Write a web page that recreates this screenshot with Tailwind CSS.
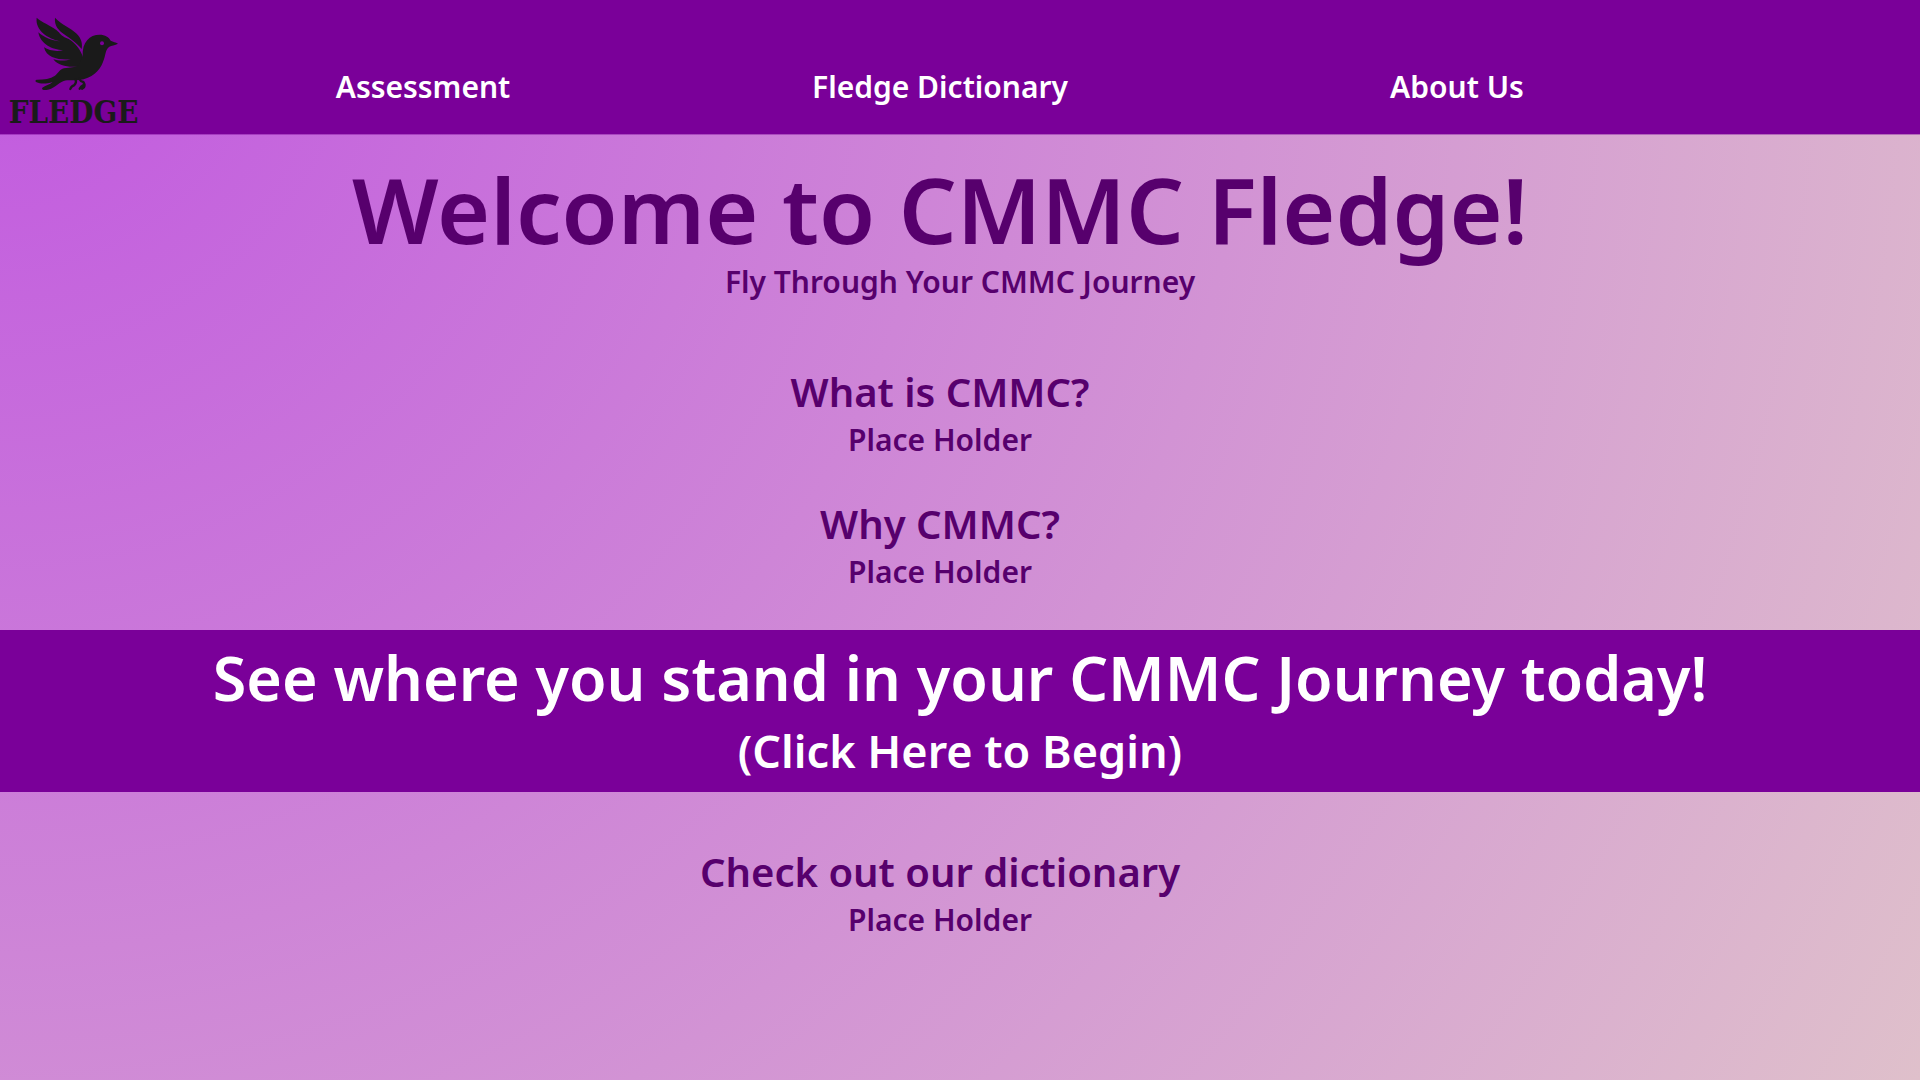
<!DOCTYPE html>
<html lang="en">
<head>
<meta charset="utf-8">
<title>CMMC Fledge</title>
<script src="https://cdn.jsdelivr.net/npm/@tailwindcss/browser@4"></script>
</head>
<body class="min-h-screen bg-[radial-gradient(circle_farthest-corner_at_0%_0%,#c158e0,#dfc0cb)] font-['Noto_Sans',sans-serif] font-semibold text-[#57006d]">
<header class="flex h-[134px] items-start bg-[#7a0099] text-white shadow-[0_1px_0_#7a009966]">
  <a href="#" aria-label="Fledge home" class="w-[146px] shrink-0">
    <svg viewBox="0 0 438 402" class="h-[134px] w-[146px]" fill="#1a1a1a">
      <!-- upper feather -->
      <path d="M165 53C185 74 212 84 230 101C244 115 248 130 245 147C228 126 205 112 186 98C171 86 163 72 165 53Z"/>
      <!-- wing -->
      <path d="M110 53C126 67 149 75 169 90C181 100 183 108 199 114C218 121 239 143 248 168L250 200L228 200C205 202 174 198 160 178C180 184 201 182 212 178C180 181 139 175 132 142C147 152 168 155 189 151C157 149 121 133 115 97C133 113 155 122 180 124C145 116 105 92 110 53Z"/>
      <!-- body, beak and tail -->
      <path d="M248 168C246 126 269 104 299 104C315 104 327 111 332 122C340 126 347 126 354 131C345 136 334 136 328 140C315 149 318 165 309 186C298 214 277 235 237 240C220 242 205 239 191 243C173 250 160 269 139 270C129 271 124 267 127 263C136 256 149 254 158 246C140 252 121 252 110 247C104 244 106 239 112 239C132 239 151 236 165 227C177 218 178 208 192 205C209 202 226 203 236 196Z"/>
      <!-- legs -->
      <g fill="none" stroke="#1a1a1a" stroke-linecap="round" stroke-linejoin="round" stroke-width="7">
        <path d="M226 238Q231 248 222 256Q214 258 211 267"/>
        <path d="M238 237Q242 245 250 246Q256 254 252 262L246 266M250 255Q243 258 239 266"/>
      </g>
      <circle cx="306" cy="130" r="6" fill="#7a0099"/>
      <text x="26" y="370" font-family="DejaVu Serif Condensed, DejaVu Serif, serif" font-weight="700" font-size="93">FLEDGE</text>
    </svg>
  </a>
  <nav class="flex flex-1 pt-[66px] text-[30px] leading-[42px]">
    <a href="#" class="w-[554px] text-center">Assessment</a>
    <a href="#" class="w-[480px] text-center">Fledge Dictionary</a>
    <a href="#" class="w-[554px] text-center">About Us</a>
  </nav>
</header>
<main class="text-center">
  <section class="pt-5">
    <h1 class="pr-10 text-[91px] leading-[110px]">Welcome to CMMC Fledge!</h1>
    <p class="text-[30px] leading-[36px]">Fly Through Your CMMC Journey</p>
  </section>
  <section class="pt-16 pr-10">
    <h2 class="text-[40px] leading-[56px]">What is CMMC?</h2>
    <p class="text-[30px] leading-[40px]">Place Holder</p>
  </section>
  <section class="pt-9 pr-10">
    <h2 class="text-[40px] leading-[56px]">Why CMMC?</h2>
    <p class="text-[30px] leading-[40px]">Place Holder</p>
  </section>
  <a href="#" class="mt-[38px] block h-[162px] bg-[#7a0099] pt-2 text-white">
    <span class="block text-[61px] leading-[80px]">See where you stand in your CMMC Journey today!</span>
    <span class="block text-[45px] leading-[66px]">(Click Here to Begin)</span>
  </a>
  <section class="pt-[52px] pr-10">
    <h2 class="text-[40px] leading-[56px]">Check out our dictionary</h2>
    <p class="text-[30px] leading-[40px]">Place Holder</p>
  </section>
</main>
</body>
</html>
